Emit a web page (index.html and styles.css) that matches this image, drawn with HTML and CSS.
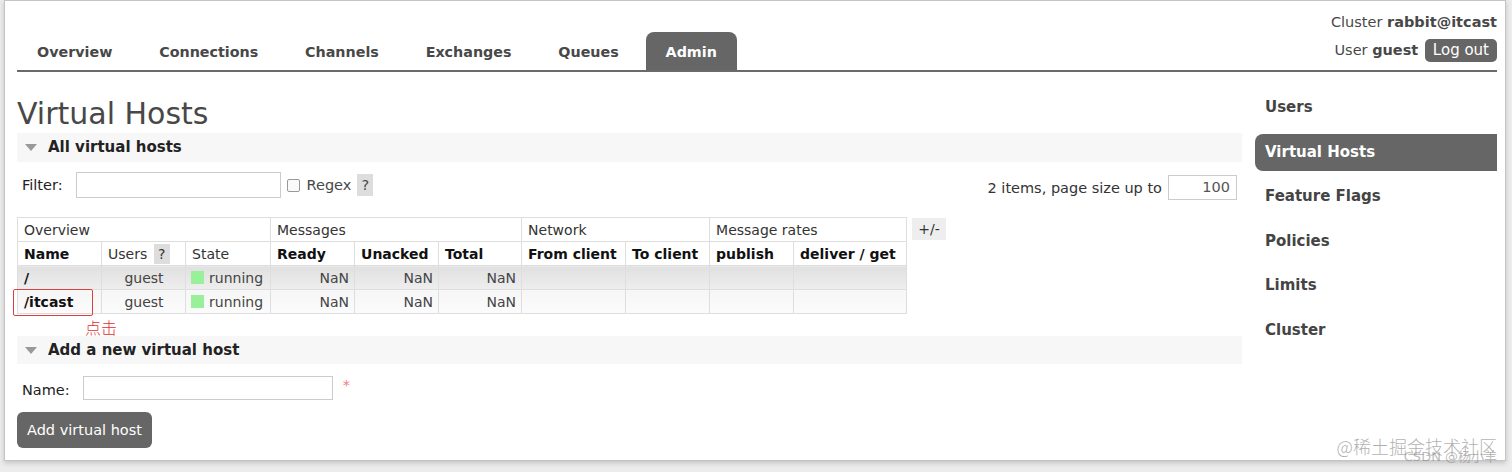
FILE: index.html
```
<!DOCTYPE html>
<html>
<head>
<meta charset="utf-8">
<link rel="stylesheet" href="styles.css">
</head>
<body>
<div class="frame">
  <div class="header">
    <ul class="tabs">
      <li class="tab">Overview</li>
      <li class="tab">Connections</li>
      <li class="tab">Channels</li>
      <li class="tab">Exchanges</li>
      <li class="tab">Queues</li>
      <li class="tab active">Admin</li>
    </ul>
    <div class="userinfo">
      <div class="cluster">Cluster <b>rabbit@itcast</b></div>
      <div class="userrow">User <b>guest</b> <span class="logout">Log out</span></div>
    </div>
  </div>
  <div class="body">
    <div class="main">
      <h1 class="title">Virtual Hosts</h1>
      <div class="section"><span class="tri"></span>All virtual hosts</div>
      <div class="filterrow">
        <div class="filterleft">
          <span class="lbl">Filter:</span>
          <span class="input filter"></span>
          <span class="checkbox"></span>
          <span class="regex">Regex</span>
          <span class="help">?</span>
        </div>
        <div class="filterright">
          <span>2 items, page size up to</span>
          <span class="input pagesize">100</span>
        </div>
      </div>
      <div class="tablewrap">
        <table class="list">
          <colgroup>
            <col style="width:84px"><col style="width:84px"><col style="width:85px"><col style="width:84px"><col style="width:84px"><col style="width:83px"><col style="width:104px"><col style="width:84px"><col style="width:84px"><col style="width:113px">
          </colgroup>
          <thead>
            <tr class="grp">
              <th colspan="3">Overview</th>
              <th colspan="3">Messages</th>
              <th colspan="2">Network</th>
              <th colspan="2">Message rates</th>
            </tr>
            <tr class="sub">
              <th>Name</th>
              <th class="norm">Users <span class="help small">?</span></th>
              <th class="norm">State</th>
              <th>Ready</th>
              <th>Unacked</th>
              <th>Total</th>
              <th>From client</th>
              <th>To client</th>
              <th>publish</th>
              <th>deliver / get</th>
            </tr>
          </thead>
          <tbody>
            <tr class="alt1">
              <td class="name">/</td>
              <td class="c">guest</td>
              <td><span class="green"></span>running</td>
              <td class="r">NaN</td>
              <td class="r">NaN</td>
              <td class="r">NaN</td>
              <td></td><td></td><td></td><td></td>
            </tr>
            <tr class="alt2">
              <td class="name mark">/itcast<span class="redbox"></span><span class="note">点击</span></td>
              <td class="c">guest</td>
              <td><span class="green"></span>running</td>
              <td class="r">NaN</td>
              <td class="r">NaN</td>
              <td class="r">NaN</td>
              <td></td><td></td><td></td><td></td>
            </tr>
          </tbody>
        </table>
        <span class="plusminus">+/-</span>
      </div>
      <div class="section add"><span class="tri"></span>Add a new virtual host</div>
      <div class="namerow">
        <span class="lbl">Name:</span>
        <span class="input name-in"></span>
        <span class="req">*</span>
      </div>
      <div class="btn">Add virtual host</div>
    </div>
    <ul class="sidebar">
      <li>Users</li>
      <li class="active">Virtual Hosts</li>
      <li>Feature Flags</li>
      <li>Policies</li>
      <li>Limits</li>
      <li>Cluster</li>
    </ul>
  </div>
  <div class="watermark">@稀土掘金技术社区</div>
  <div class="watermark2">CSDN @杨小羊</div>
</div>
</body>
</html>
```
FILE: styles.css
```
html, body {
  margin: 0;
  padding: 0;
  background: #ececec;
}
body {
  padding: 0 6px 9px 4px;
  font-family: "DejaVu Sans", Verdana, sans-serif;
  font-size: 14px;
  color: #484848;
}
.frame {
  position: relative;
  background: #fff;
  border: 1px solid #c4c4c4;
  box-shadow: 0 2px 5px rgba(0,0,0,0.18);
  height: 461px;
  box-sizing: border-box;
  padding: 0 8px 0 12px;
}
.header {
  display: flex;
  justify-content: space-between;
  align-items: flex-end;
  height: 69px;
  border-bottom: 2px solid #6a6a6a;
}
.tabs {
  list-style: none;
  margin: 0;
  padding: 0;
  display: flex;
}
.tab {
  height: 38px;
  line-height: 40px;
  padding: 0 20px;
  margin-right: 6.8px;
  font-weight: bold;
  font-size: 14.3px;
  color: #484848;
  border-radius: 8px 8px 0 0;
}
.tab.active {
  background: #666;
  color: #fff;
}
.userinfo {
  align-self: flex-start;
  padding-top: 13px;
  text-align: right;
  font-size: 14.5px;
  color: #484848;
}
.cluster {
  line-height: 17px;
}
.userrow {
  margin-top: 8px;
  line-height: 23px;
}
.logout {
  display: inline-block;
  background: #666;
  color: #fff;
  border-radius: 5px;
  padding: 0 8px;
  height: 23px;
  line-height: 23px;
  margin-left: 2px;
  font-size: 15px;
}
.body {
  display: flex;
}
.main {
  width: 1225px;
  padding-top: 25px;
}
.title {
  margin: 0;
  font-size: 30px;
  line-height: 33px;
  font-weight: normal;
  color: #484848;
}
.section {
  margin-top: 3px;
  height: 29px;
  line-height: 29px;
  background: #f7f7f7;
  font-weight: bold;
  font-size: 15px;
  color: #222;
  padding-left: 31px;
  position: relative;
}
.tri {
  position: absolute;
  left: 8px;
  top: 11px;
  width: 0;
  height: 0;
  border-left: 6px solid transparent;
  border-right: 6px solid transparent;
  border-top: 7px solid #999;
}
.filterrow {
  display: flex;
  justify-content: space-between;
  margin-top: 10px;
  height: 28px;
}
.filterleft, .filterright {
  display: flex;
  align-items: center;
}
.filterleft {
  padding-left: 5px;
  align-self: flex-start;
  height: 26px;
  font-size: 14.5px;
}
.filterright {
  padding-top: 3px;
  padding-right: 5px;
  height: 25px;
  font-size: 14.5px;
}
.lbl {
  color: #222;
}
.input {
  display: inline-block;
  box-sizing: border-box;
  border: 1px solid #ccc;
  background: #fff;
}
.filter {
  width: 205px;
  height: 26px;
  margin-left: 13px;
}
.checkbox {
  display: inline-block;
  width: 11px;
  height: 11px;
  border: 1px solid #999;
  border-radius: 2px;
  margin-left: 6px;
  background: #fafafa;
}
.regex {
  margin-left: 7px;
}
.help {
  display: inline-block;
  background: #ddd;
  width: 16px;
  height: 22px;
  line-height: 22px;
  text-align: center;
  margin-left: 6px;
}
.filterright span:first-child {
  color: #333;
}
.pagesize {
  width: 69px;
  height: 25px;
  line-height: 23px;
  margin-left: 6px;
  text-align: right;
  padding-right: 6px;
  color: #555;
}
.tablewrap {
  display: flex;
  align-items: flex-start;
  margin-top: 17px;
}
table.list {
  border-collapse: collapse;
  table-layout: fixed;
  width: 889px;
}
table.list th, table.list td {
  border: 1px solid #dedede;
  height: 24px;
  padding: 0 5px 0 6px;
  text-align: left;
  white-space: nowrap;
  box-sizing: border-box;
  font-size: 14px;
}
table.list th {
  color: #111;
  background: #fff;
}
tr.grp th {
  font-weight: normal;
  color: #333;
}
tr.sub th.norm {
  font-weight: normal;
  color: #333;
}
.help.small {
  width: 16px;
  height: 20px;
  line-height: 20px;
  margin-left: 2px;
}
tr.alt1 td {
  background: linear-gradient(#e0e0e0, #eeeeee);
}
tr.alt2 td {
  background: linear-gradient(#f6f6f6, #fbfbfb);
}
td.name {
  font-weight: bold;
  color: #111;
}
td.c { text-align: center !important; color: #444; }
td.r { text-align: right !important; color: #444; }
td { color: #444; }
.green {
  display: inline-block;
  width: 13px;
  height: 13px;
  background: #98f098;
  vertical-align: -1px;
  margin-right: 5px;
  margin-left: -1px;
}
td.mark {
  position: relative;
}
.redbox {
  position: absolute;
  left: -5px;
  top: -1px;
  width: 78px;
  height: 25px;
  border: 1.5px solid #d94040;
  border-radius: 2px;
}
.note {
  position: absolute;
  left: 67px;
  top: 29px;
  font-family: "Noto Sans CJK SC", sans-serif;
  font-weight: 300;
  font-size: 16px;
  line-height: 16px;
  color: #e03030;
}
.plusminus {
  display: inline-block;
  background: #eee;
  margin-left: 5px;
  margin-top: 1px;
  width: 34px;
  height: 22px;
  line-height: 22px;
  text-align: center;
  color: #333;
}
.section.add {
  margin-top: 22px;
  height: 28px;
  line-height: 28px;
}
.namerow {
  display: flex;
  align-items: flex-start;
  margin-top: 12px;
  padding-left: 5px;
  height: 24px;
  font-size: 14.5px;
}
.namerow .lbl {
  line-height: 24px;
  margin-top: 2px;
}
.name-in {
  width: 250px;
  height: 24px;
  margin-left: 13px;
}
.req {
  color: #f08080;
  margin-left: 10px;
  line-height: 18px;
}
.btn {
  display: inline-block;
  margin-top: 12px;
  background: #666;
  color: #fff;
  border-radius: 6px;
  height: 36px;
  line-height: 36px;
  padding: 0 10px;
  font-size: 14.5px;
}
.sidebar {
  list-style: none;
  margin: 0 0 0 13px;
  padding: 17px 0 0 0;
  flex: 1;
}
.sidebar li {
  height: 37px;
  line-height: 37px;
  margin-bottom: 7.5px;
  padding-left: 10px;
  font-weight: bold;
  font-size: 15px;
  color: #444;
  border-radius: 8px 0 0 8px;
}
.sidebar li.active {
  background: #666;
  color: #fff;
}
.watermark {
  position: absolute;
  right: 8px;
  bottom: 3px;
  font-family: "Noto Sans CJK SC", sans-serif;
  font-size: 18px;
  line-height: 22px;
  color: rgba(120,120,120,0.6);
  font-weight: 300;
}
.watermark2 {
  position: absolute;
  right: 8px;
  bottom: -5px;
  font-family: "DejaVu Sans", "Noto Sans CJK SC", sans-serif;
  font-size: 13px;
  line-height: 16px;
  color: rgba(130,130,130,0.55);
}
```
